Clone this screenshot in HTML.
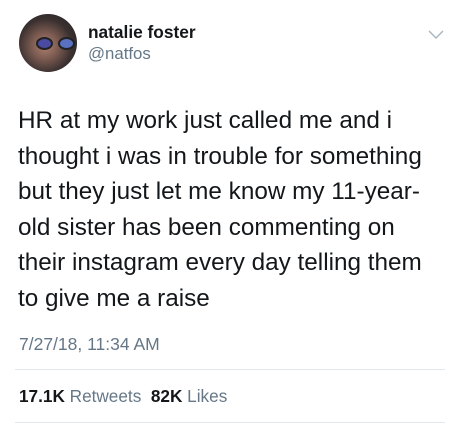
<!DOCTYPE html>
<html><head><style>
body{margin:0;width:460px;height:424px;background:#fff;font-family:"Liberation Sans",sans-serif;position:relative;overflow:hidden}
.av{position:absolute;left:19px;top:14px;width:58px;height:58px;border-radius:50%;background:radial-gradient(circle at 45% 55%,#b08070 0,#7a5a50 30%,#3a3030 60%,#222 100%)}
.g1,.g2{position:absolute;top:37px;width:13px;height:9px;border-radius:50%;background:#4a4aa0;border:2px solid #222}
.g1{left:36px}.g2{left:58px;background:#5a70c0}
.name{position:absolute;left:88px;top:22px;font-size:17.3px;font-weight:bold;color:#14171a}
.h{position:absolute;left:88px;top:44px;font-size:16.8px;color:#657786}
.t{position:absolute;left:18px;top:103px;width:445px;font-size:24.3px;line-height:35.5px;color:#14171a;white-space:nowrap}
.ts{position:absolute;left:19px;top:334px;font-size:17.5px;color:#657786}
.l{position:absolute;left:15px;width:430px;height:1px;background:#e1e8ed}
.st{position:absolute;left:19px;top:386px;font-size:17.2px;color:#657786}
.st b{color:#14171a}
</style></head><body>
<div class="av"></div><div class="g1"></div><div class="g2"></div>
<div class="name">natalie foster</div>
<div class="h">@natfos</div>
<svg style="position:absolute;left:428px;top:30px" width="16" height="10"><path d="M1 1L8 8L15 1" stroke="#aab8c2" stroke-width="1.5" fill="none"/></svg>
<div class="t">HR at my work just called me and i<br>thought i was in trouble for something<br>but they just let me know my 11-year-<br>old sister has been commenting on<br>their instagram every day telling them<br>to give me a raise</div>
<div class="ts">7/27/18, 11:34 AM</div>
<div class="l" style="top:369px"></div>
<div class="st"><b>17.1K</b> Retweets&nbsp; <b>82K</b> Likes</div>
<div class="l" style="top:422px"></div>
</body></html>
